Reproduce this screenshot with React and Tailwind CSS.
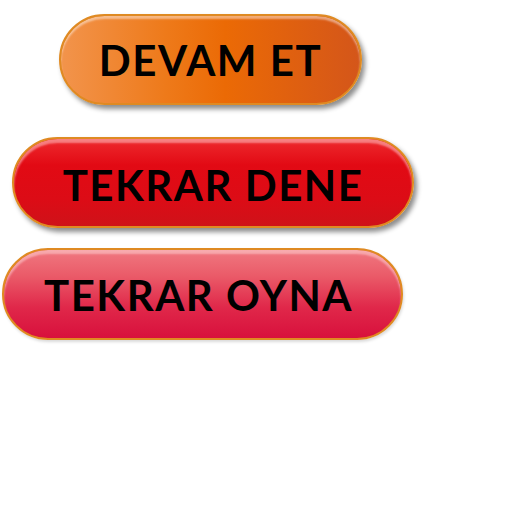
export default function App() {
  return (
    <div className="w-[512px] h-[512px] bg-white flex flex-col items-start pt-[14px]">
      <button className="ml-[59px] w-[303px] h-[91px] rounded-[46px] border-2 border-[#df8a22] bg-[linear-gradient(90deg,#f2944c_0%,#ee7a1a_35%,#eb6a05_55%,#d4561a_100%)] shadow-[3px_4px_5px_rgba(0,0,0,0.45),inset_0_3px_2px_rgba(255,255,255,0.45)] flex items-center justify-center">
        <span className="font-['Lato',sans-serif] font-bold text-[42px] text-black tracking-[1.5px] pt-[2px]">DEVAM ET</span>
      </button>
      <button className="mt-[32px] ml-[12px] w-[402px] h-[91px] rounded-[46px] border-2 border-[#df8a22] bg-[linear-gradient(180deg,#ee2a2e_0%,#e20a14_30%,#dc0c16_70%,#cf1219_100%)] shadow-[3px_4px_5px_rgba(0,0,0,0.45),inset_0_4px_2px_rgba(255,200,200,0.55)] flex items-center justify-center">
        <span className="font-['Lato',sans-serif] font-bold text-[42px] text-black tracking-[1.5px] pt-[5px]">TEKRAR DENE</span>
      </button>
      <button className="mt-[20px] ml-[2px] w-[401px] h-[92px] rounded-[46px] border-2 border-[#df8a22] bg-[linear-gradient(180deg,#f07880_0%,#ea5a68_30%,#e0284a_65%,#d8103c_100%)] shadow-[1px_2px_3px_rgba(0,0,0,0.15),inset_0_4px_2px_rgba(255,220,220,0.5)] flex items-center justify-center">
        <span className="font-['Lato',sans-serif] font-bold text-[42px] text-black tracking-[1.5px] -ml-[8px] pt-[2px]">TEKRAR OYNA</span>
      </button>
    </div>
  );
}
